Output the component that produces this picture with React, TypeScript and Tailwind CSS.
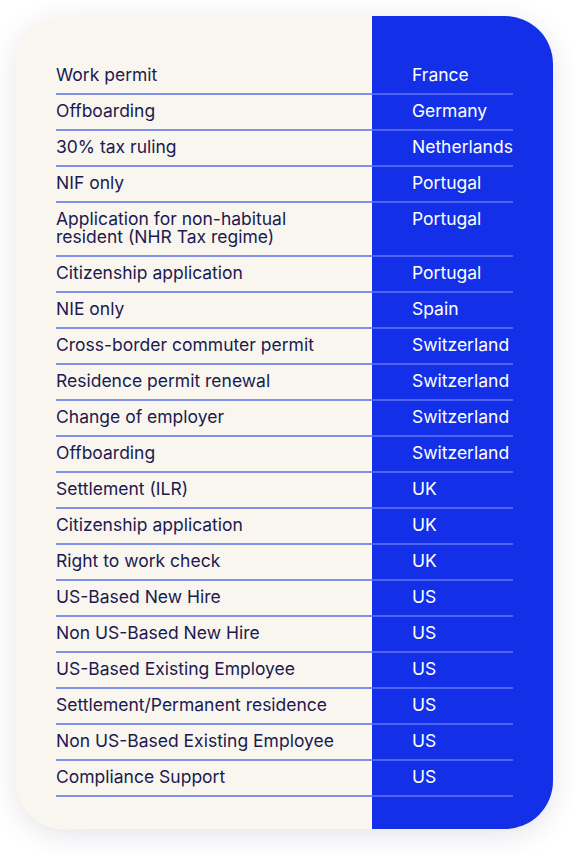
import React from 'react'

const rows: [string, string][] = [
  ['Work permit', 'France'],
  ['Offboarding', 'Germany'],
  ['30% tax ruling', 'Netherlands'],
  ['NIF only', 'Portugal'],
  ['Application for non-habitual resident (NHR Tax regime)', 'Portugal'],
  ['Citizenship application', 'Portugal'],
  ['NIE only', 'Spain'],
  ['Cross-border commuter permit', 'Switzerland'],
  ['Residence permit renewal', 'Switzerland'],
  ['Change of employer', 'Switzerland'],
  ['Offboarding', 'Switzerland'],
  ['Settlement (ILR)', 'UK'],
  ['Citizenship application', 'UK'],
  ['Right to work check', 'UK'],
  ['US-Based New Hire', 'US'],
  ['Non US-Based New Hire', 'US'],
  ['US-Based Existing Employee', 'US'],
  ['Settlement/Permanent residence', 'US'],
  ['Non US-Based Existing Employee', 'US'],
  ['Compliance Support', 'US'],
]

export default function App() {
  return (
    <div className="min-h-[854px] bg-white p-4" style={{ fontFamily: 'Inter, "Liberation Sans", sans-serif' }}>
      <div className="w-[537px] rounded-[48px] overflow-hidden shadow-[0_6px_28px_rgba(40,40,90,0.12)] bg-[linear-gradient(to_right,#f9f6ef_356px,#1330e8_356px)] pt-[43px] pb-[32px] px-[40px]">
        {rows.map(([service, country], i) => (
          <div key={i} className="grid grid-cols-[316px_1fr] text-[17.5px] leading-[18px]">
            <div className="border-b-2 border-[#8190e8] pt-[7px] pb-[9px] pr-6 text-[#201a50]">{service}</div>
            <div className="border-b-2 border-[#4d63f2] pt-[7px] pb-[9px] pl-[40px] text-white whitespace-nowrap">{country}</div>
          </div>
        ))}
      </div>
    </div>
  )
}
